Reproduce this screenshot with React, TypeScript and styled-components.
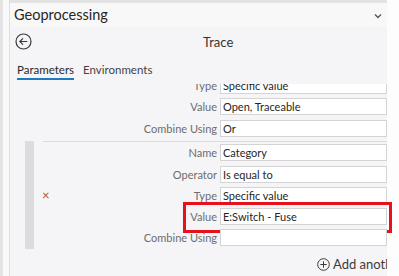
import React from "react";
import styled, { createGlobalStyle } from "styled-components";

const Global = createGlobalStyle`
  html, body { margin: 0; padding: 0; background: #fbfbfb; }
  body { font-family: Lato, "Noto Sans", sans-serif; }
  * { box-sizing: border-box; }
`;

const Frame = styled.div`
  display: flex;
  width: 399px;
  height: 276px;
  overflow: hidden;
`;

const LeftStrip = styled.div`
  width: 10px;
  flex: none;
  background: #f9f9f9;
  border-left: 3px solid #e4e4e4;
  border-right: 1px solid #dedede;
`;

const RightStrip = styled.div`
  flex: 1;
  background: #fdfdfd;
`;

const Panel = styled.div`
  width: 377px;
  flex: none;
  display: flex;
  flex-direction: column;
  background: #f5f4f7;
  border-top: 3px solid #e3e3e3;
`;

const Header = styled.div`
  height: 24px;
  flex: none;
  display: flex;
  align-items: center;
  justify-content: space-between;
  padding: 1px 5px 0 4px;
  background: #f8f8f9;
`;

const Title = styled.div`
  font-size: 14.5px;
  color: #262626;
  line-height: 1;
`;

const TraceBar = styled.div`
  height: 29px;
  flex: none;
  display: flex;
  align-items: center;
  padding-left: 5px;
`;

const TraceTitle = styled.div`
  font-size: 13px;
  color: #333;
  margin-left: 171px;
`;

const Tabs = styled.div`
  height: 28px;
  flex: none;
  display: flex;
  align-items: flex-end;
  gap: 9px;
  padding: 0 0 4px 7px;
`;

const Tab = styled.div<{ $active?: boolean }>`
  font-size: 11.5px;
  color: ${(p) => (p.$active ? "#2a2a2a" : "#444")};
  padding-bottom: 1px;
  border-bottom: 2px solid ${(p) => (p.$active ? "#1f7ac4" : "transparent")};
  line-height: 14px;
`;

const Content = styled.div`
  flex: 1;
  overflow-x: visible;
  overflow-y: clip;
`;

const Scroller = styled.div`
  margin-top: -9px;
  display: flex;
  flex-direction: column;
`;

const Rows = styled.div`
  display: flex;
  flex-direction: column;
  flex: 1;
`;

const Row = styled.div<{ $labelW: number }>`
  display: grid;
  grid-template-columns: ${(p) => p.$labelW}px 167px;
  column-gap: 3px;
  height: 21.25px;
  align-items: center;
`;

const LabelCell = styled.div`
  display: flex;
  align-items: center;
`;

const Label = styled.span`
  font-size: 11px;
  color: #6d6d6d;
  margin-left: auto;
`;

const Input = styled.div`
  height: 17px;
  position: relative;
  background: #ffffff;
  border: 1px solid #d4d4d4;
  font-size: 11px;
  color: #262626;
  padding-left: 2px;
  display: flex;
  align-items: center;
  white-space: nowrap;
`;

const Group = styled.div`
  display: flex;
  margin-top: 2px;
`;

const GroupBar = styled.div`
  width: 9px;
  margin-left: 15px;
  background: #dcdcdc;
  flex: none;
`;

const Divider = styled.div`
  height: 1px;
  background: #dcdcdc;
  margin: 0 0 0.5px 9px;
`;

const XMark = styled.span`
  margin-left: 8px;
  font-size: 13px;
  color: #b0543e;
  line-height: 1;
`;

const Highlight = styled.div`
  position: absolute;
  left: -38px;
  top: -7px;
  width: 209px;
  height: 31px;
  border: 3px solid #e8111b;
  pointer-events: none;
`;

const Footer = styled.div`
  display: flex;
  align-items: center;
  gap: 3px;
  height: 14px;
  padding-left: 307px;
  margin-top: 8.5px;
  white-space: nowrap;
  overflow: hidden;
  & > svg { flex: none; }
`;

const AddText = styled.span`
  font-size: 13px;
  color: #3c3c3c;
  flex: none;
`;

const Chevron = () => (
  <svg width="8" height="6" viewBox="0 0 8 6">
    <path d="M1 1.5 L4 4.5 L7 1.5" fill="none" stroke="#555" strokeWidth="1.3" />
  </svg>
);

const BackIcon = () => (
  <svg width="17" height="17" viewBox="0 0 17 17">
    <circle cx="8.5" cy="8.5" r="7.5" fill="none" stroke="#3a3a3a" strokeWidth="1.2" />
    <path d="M12.3 8.5 H5 M8 5.3 L4.8 8.5 L8 11.7" fill="none" stroke="#3a3a3a" strokeWidth="1.2" />
  </svg>
);

const PlusIcon = () => (
  <svg width="13" height="13" viewBox="0 0 13 13">
    <circle cx="6.5" cy="6.5" r="5.8" fill="none" stroke="#3a3a3a" strokeWidth="1" />
    <path d="M6.5 3.3 V9.7 M3.3 6.5 H9.7" fill="none" stroke="#3a3a3a" strokeWidth="1" />
  </svg>
);

type R = { label: string; value: string; x?: boolean; hi?: boolean };

const group1: R[] = [
  { label: "Type", value: "Specific value" },
  { label: "Value", value: "Open, Traceable" },
  { label: "Combine Using", value: "Or" },
];

const group2: R[] = [
  { label: "Name", value: "Category" },
  { label: "Operator", value: "Is equal to" },
  { label: "Type", value: "Specific value", x: true },
  { label: "Value", value: "E:Switch - Fuse", hi: true },
  { label: "Combine Using", value: "" },
];

export default function App() {
  return (
    <>
      <Global />
      <Frame>
        <LeftStrip />
        <Panel>
          <Header>
            <Title>Geoprocessing</Title>
            <Chevron />
          </Header>
          <TraceBar>
            <BackIcon />
            <TraceTitle>Trace</TraceTitle>
          </TraceBar>
          <Tabs>
            <Tab $active>Parameters</Tab>
            <Tab>Environments</Tab>
          </Tabs>
          <Content>
            <Scroller>
              {group1.map((r, i) => (
                <Row key={i} $labelW={207}>
                  <LabelCell>
                    <Label>{r.label}</Label>
                  </LabelCell>
                  <Input>{r.value}</Input>
                </Row>
              ))}
              <Group>
                <GroupBar />
                <Rows>
                  <Divider />
                  {group2.map((r, i) => (
                    <Row key={i} $labelW={183}>
                      <LabelCell>
                        {r.x && <XMark>×</XMark>}
                        <Label>{r.label}</Label>
                      </LabelCell>
                      <Input>
                        {r.value}
                        {r.hi && <Highlight />}
                      </Input>
                    </Row>
                  ))}
                </Rows>
              </Group>
              <Footer>
                <PlusIcon />
                <AddText>Add another</AddText>
              </Footer>
            </Scroller>
          </Content>
        </Panel>
        <RightStrip />
      </Frame>
    </>
  );
}
